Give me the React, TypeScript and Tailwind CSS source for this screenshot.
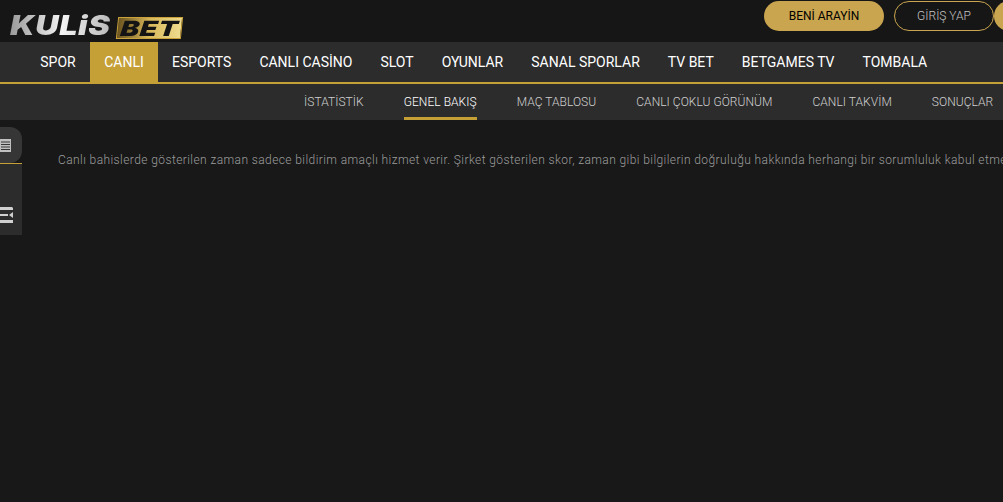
import React from "react";

const mainLinks = ["SPOR", "CANLI", "ESPORTS", "CANLI CASİNO", "SLOT", "OYUNLAR", "SANAL SPORLAR", "TV BET", "BETGAMES TV", "TOMBALA"];
const subLinks = ["İSTATİSTİK", "GENEL BAKIŞ", "MAÇ TABLOSU", "CANLI ÇOKLU GÖRÜNÜM", "CANLI TAKVİM", "SONUÇLAR"];

const Logo = () => (
  <div className="ml-[10px] mt-[16px] flex h-[23px] w-[172px] shrink-0 items-center italic font-['Inter',sans-serif] font-black">
    <span className="w-[107px]">
      <span className="inline-block origin-left scale-x-[1.2] bg-gradient-to-r from-[#9a9a9a] via-[#f4f4f4] to-[#b5b5b5] bg-clip-text pr-[3px] text-[27px] leading-[23px] tracking-[0.5px] text-transparent">
        KULiS
      </span>
    </span>
    <span className="flex h-[22px] w-[65px] -skew-x-6 items-center justify-center border border-[#c9a23c] bg-gradient-to-r from-[#6e5620] via-[#d9b95a] to-[#efdc8e] text-[21px] leading-none text-[#141414]">
      <span className="inline-block scale-x-[1.35] tracking-[0.5px]">BET</span>
    </span>
  </div>
);

export default function App() {
  return (
    <div className="relative h-[502px] w-[1003px] overflow-hidden bg-[#181818] font-['Roboto',sans-serif]">
      {/* Top bar */}
      <header className="flex h-[42px] items-start bg-[#161616]">
        <Logo />
        <div className="ml-[582px] mt-[1px] flex shrink-0">
          <button className="h-[30px] w-[120px] rounded-full bg-[#c9a54f] text-[12px] text-black">BENİ ARAYİN</button>
          <button className="ml-[10px] h-[30px] w-[100px] rounded-full border border-[#c9a54f] text-[12px] font-light text-[#c4c4c4]">GİRİŞ YAP</button>
          <div className="h-[30px] w-[60px] rounded-full bg-[#c9a54f]" />
        </div>
      </header>

      {/* Main nav */}
      <nav className="flex h-[42px] border-b-2 border-[#c5a037] bg-[#2c2c2c] pl-[26px]">
        {mainLinks.map((link) => (
          <a
            key={link}
            className={`flex items-center justify-center px-[14px] text-[14px] whitespace-nowrap text-white ${link === "CANLI" ? "w-[68px] bg-[#c5a037]" : ""} ${link === "SPOR" ? "w-[64px]" : ""}`}
          >
            {link}
          </a>
        ))}
      </nav>

      {/* Sub nav */}
      <nav className="flex h-[36px] gap-[40px] bg-[#2c2c2c] pl-[304px]">
        {subLinks.map((link) => (
          <a
            key={link}
            className={`flex items-center whitespace-nowrap border-b-[3px] pt-[3px] text-[12px] font-light tracking-[0.05px] ${
              link === "GENEL BAKIŞ" ? "border-[#c5a037] text-white" : "border-transparent text-[#d0d0d0]"
            }`}
          >
            {link}
          </a>
        ))}
      </nav>

      {/* Content */}
      <p className="mt-[32px] ml-[58px] whitespace-nowrap text-[12px] font-light leading-[16px] tracking-[0.41px] text-[#9c9c9c]">
        Canlı bahislerde gösterilen zaman sadece bildirim amaçlı hizmet verir. Şirket gösterilen skor, zaman gibi bilgilerin doğruluğu hakkında herhangi bir sorumluluk kabul etmez.
      </p>

      {/* Side tools */}
      <aside className="absolute left-0 top-[127px] w-[22px]">
        <div className="flex h-[36px] items-center justify-end rounded-r-[12px] bg-[#363636] pr-[11px]">
          <svg width="11" height="13" viewBox="0 0 11 13" className="shrink-0 text-[#c0c0c0]">
            <rect x="0" y="0" width="11" height="13" fill="currentColor" />
            <path d="M1 3h9M1 5.500h9M1 8h9M1 10.500h9" stroke="#363636" strokeWidth="1" />
          </svg>
        </div>
        <div className="h-px bg-[#c5a037]" />
        <div className="relative h-[71px] bg-[#2c2c2c]">
          <svg width="14" height="16" viewBox="0 0 14 16" className="absolute left-0 top-[43px] text-[#d0d0d0]">
            <path d="M0 0h12l1 1v2H0zM0 7h8v2H0zM0 13h13v3H0z" fill="currentColor" />
            <path d="M13 5v6l-4-3z" fill="currentColor" />
          </svg>
        </div>
      </aside>
    </div>
  );
}
